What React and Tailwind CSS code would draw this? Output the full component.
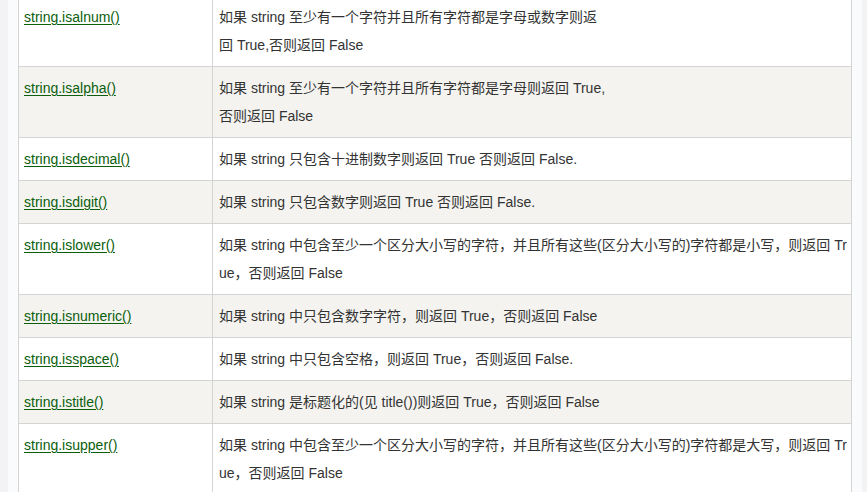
import React from "react";

const rows = [
  {
    name: "string.isalnum()",
    desc: ["如果 string 至少有一个字符并且所有字符都是字母或数字则返", "回 True,否则返回 False"],
  },
  {
    name: "string.isalpha()",
    desc: ["如果 string 至少有一个字符并且所有字符都是字母则返回 True,", "否则返回 False"],
  },
  { name: "string.isdecimal()", desc: ["如果 string 只包含十进制数字则返回 True 否则返回 False."] },
  { name: "string.isdigit()", desc: ["如果 string 只包含数字则返回 True 否则返回 False."] },
  {
    name: "string.islower()",
    desc: [
      "如果 string 中包含至少一个区分大小写的字符，并且所有这些(区分大小写的)字符都是小写，则返回 Tr",
      "ue，否则返回 False",
    ],
  },
  { name: "string.isnumeric()", desc: ["如果 string 中只包含数字字符，则返回 True，否则返回 False"] },
  { name: "string.isspace()", desc: ["如果 string 中只包含空格，则返回 True，否则返回 False."] },
  { name: "string.istitle()", desc: ["如果 string 是标题化的(见 title())则返回 True，否则返回 False"] },
  {
    name: "string.isupper()",
    desc: [
      "如果 string 中包含至少一个区分大小写的字符，并且所有这些(区分大小写的)字符都是大写，则返回 Tr",
      "ue，否则返回 False",
    ],
  },
];

const App = () => {
  return (
    <div
      className="h-[492px] w-[867px] overflow-hidden bg-[#f3f3f5] pl-[8px] pr-[5px]"
      style={{ fontFamily: '"Liberation Sans", "Noto Sans CJK SC", sans-serif' }}
    >
      <div className="h-full overflow-hidden bg-[#fafbfd] pl-[10px] pr-[10px]">
        {/* table is scrolled a little past the top edge */}
        <table className="-mt-[5px] w-[834px] table-fixed border-collapse text-[14px] leading-[28px] text-[#333333]">
          <colgroup>
            <col className="w-[194px]" />
            <col />
          </colgroup>
          <tbody>
            {rows.map((row, i) => (
              <tr key={row.name} className={i % 2 === 0 ? "bg-white" : "bg-[#f4f3f0]"}>
                <td className="border border-[#d4d4d4] py-[7px] pl-[5px] pr-[5px] align-top">
                  <a href="#" className="text-[#0b5e0b] underline decoration-[#0b5e0b] underline-offset-[2px]">
                    {row.name}
                  </a>
                </td>
                <td className="border border-[#d4d4d4] py-[7px] pl-[6px] pr-[5px] align-top whitespace-nowrap">
                  {row.desc.map((line, j) => (
                    <div key={j}>{line}</div>
                  ))}
                </td>
              </tr>
            ))}
          </tbody>
        </table>
      </div>
    </div>
  );
};

export default App;
